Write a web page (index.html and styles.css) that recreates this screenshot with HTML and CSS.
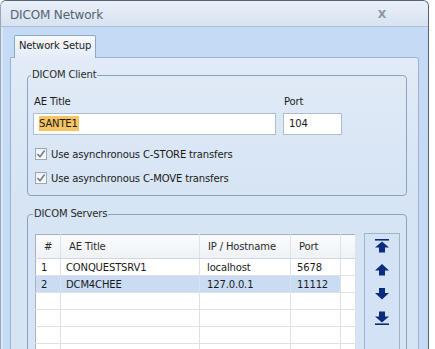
FILE: index.html
```html
<!DOCTYPE html>
<html>
<head>
<meta charset="utf-8">
<link rel="stylesheet" href="styles.css">
</head>
<body>
<div class="window">
  <div class="titlebar">
    <span class="title">DICOM Network</span>
    <span class="close">X</span>
  </div>
  <div class="frame">
    <div class="tabs"><div class="tab">Network Setup</div></div>
    <div class="panel">
      <fieldset class="group client">
        <legend>DICOM Client</legend>
        <div class="fields">
          <div class="field ae">
            <div class="label">AE Title</div>
            <div class="input"><span class="sel">SANTE1</span></div>
          </div>
          <div class="field port">
            <div class="label">Port</div>
            <div class="input">104</div>
          </div>
        </div>
        <div class="check first">
          <span class="box"><svg viewBox="0 0 10 10" width="10" height="10"><path d="M1.5 5 L4 7.8 L8.6 1.6" fill="none" stroke="#6f7e92" stroke-width="1.6"/></svg></span>
          <span>Use asynchronous C-STORE transfers</span>
        </div>
        <div class="check">
          <span class="box"><svg viewBox="0 0 10 10" width="10" height="10"><path d="M1.5 5 L4 7.8 L8.6 1.6" fill="none" stroke="#6f7e92" stroke-width="1.6"/></svg></span>
          <span>Use asynchronous C-MOVE transfers</span>
        </div>
      </fieldset>
      <fieldset class="group servers">
        <legend>DICOM Servers</legend>
        <div class="servers-body">
          <table class="grid">
            <colgroup>
              <col class="c-num"><col class="c-ae"><col class="c-ip"><col class="c-port"><col class="c-fill">
            </colgroup>
            <thead>
              <tr><th class="num">#</th><th>AE Title</th><th>IP / Hostname</th><th>Port</th><th></th></tr>
            </thead>
            <tbody>
              <tr><td>1</td><td>CONQUESTSRV1</td><td>localhost</td><td>5678</td><td class="fill"></td></tr>
              <tr class="selected"><td>2</td><td>DCM4CHEE</td><td>127.0.0.1</td><td>11112</td><td class="fill"></td></tr>
              <tr><td></td><td></td><td></td><td></td><td class="fill"></td></tr>
              <tr><td></td><td></td><td></td><td></td><td class="fill"></td></tr>
              <tr><td></td><td></td><td></td><td></td><td class="fill"></td></tr>
              <tr><td></td><td></td><td></td><td></td><td class="fill"></td></tr>
            </tbody>
          </table>
          <div class="movebar">
            <svg class="mv" viewBox="0 0 16 14" width="16" height="14"><rect x="1" y="0" width="14" height="1.6" fill="#0d2b7e"/><path d="M8 2.5 L15 8.5 L11 8.5 L11 13.5 L5 13.5 L5 8.5 L1 8.5 Z" fill="#0d2b7e"/></svg>
            <svg class="mv" viewBox="0 0 16 14" width="16" height="14"><path d="M8 1 L15 7.5 L11 7.5 L11 12.5 L5 12.5 L5 7.5 L1 7.5 Z" fill="#0d2b7e"/></svg>
            <svg class="mv" viewBox="0 0 16 14" width="16" height="14"><path d="M5 1 L11 1 L11 6 L15 6 L8 12.5 L1 6 L5 6 Z" fill="#0d2b7e"/></svg>
            <svg class="mv" viewBox="0 0 16 14" width="16" height="14"><path d="M5 0.5 L11 0.5 L11 5.5 L15 5.5 L8 11.5 L1 5.5 L5 5.5 Z" fill="#0d2b7e"/><rect x="1" y="12.4" width="14" height="1.6" fill="#0d2b7e"/></svg>
          </div>
        </div>
      </fieldset>
    </div>
  </div>
</div>
</body>
</html>
```

FILE: styles.css
```css
* { box-sizing: border-box; }
html, body {
  margin: 0;
  padding: 0;
  background: #ffffff;
  height: 349px;
  overflow: hidden;
}
body {
  font-family: "DejaVu Sans", "Liberation Sans", sans-serif;
  font-size: 10px;
  letter-spacing: -0.15px;
  color: #1a1a1a;
}
.window {
  width: 429px;
  height: 360px;
  border-top: 1px solid #55636f;
  border-left: 1px solid #9aa7b5;
  border-right: 1px solid #55636f;
  border-radius: 6px 6px 0 0;
  background: #c5dbf5;
  overflow: hidden;
}
.titlebar {
  height: 26px;
  display: flex;
  align-items: center;
  justify-content: space-between;
  padding: 2px 42px 0 9px;
  background: linear-gradient(#e9eff8, #d8e3f1);
  border-bottom: 1px solid #aebfd4;
}
.title {
  font-size: 12px;
  color: #556372;
}
.close {
  font-size: 11px;
  font-weight: bold;
  color: #8a96a4;
}
.frame {
  border-left: 2px solid #dde8f5;
  padding: 8px 9px 0 7px;
}
.tabs {
  display: flex;
  padding-left: 4px;
}
.tab {
  position: relative;
  z-index: 1;
  width: 82px;
  height: 23px;
  margin-bottom: -1px;
  padding: 4px 0 0 4px;
  border: 1px solid #8fa6c4;
  border-bottom: none;
  border-radius: 2px 2px 0 0;
  background: linear-gradient(#f7f9fd, #e4ecf7);
  color: #222;
}
.panel {
  height: 300px;
  border: 1px solid #9cb2cf;
  border-radius: 0 3px 0 0;
  background: linear-gradient(#e2ebf7, #d6e4f4 140px);
  padding: 10px 11px 0 16px;
}
.group {
  margin: 0;
  border: 1px solid #8aa3c3;
  border-radius: 4px;
  min-width: 0;
}
.group legend {
  padding: 0 1px;
  margin-left: -2px;
  line-height: 14px;
  color: #2a2a2a;
}
.client {
  padding: 13px 6px 11px 5px;
}
.fields {
  display: flex;
  gap: 7px;
}
.field .label {
  height: 14px;
  line-height: 14px;
  margin-bottom: 4px;
  padding-left: 1px;
}
.ae { width: 243px; }
.port { width: 59px; }
.input {
  height: 22px;
  border: 1px solid #aebdd0;
  background: #ffffff;
  line-height: 20px;
  padding-left: 5px;
}
.sel {
  background: #f5c463;
  padding: 2px 1px 2px 0;
}
.check {
  display: flex;
  align-items: center;
  height: 12px;
  margin-top: 12px;
  padding-left: 2px;
  gap: 4px;
}
.check.first { margin-top: 13px; }
.box {
  width: 12px;
  height: 12px;
  border: 1px solid #98a6b8;
  background: linear-gradient(#eef2f7, #ffffff);
  display: flex;
  align-items: center;
  justify-content: center;
}
.box svg { display: block; }
.servers {
  margin-top: 11px;
  padding: 13px 6px 0 7px;
  height: 160px;
}
.servers-body {
  display: flex;
  align-items: flex-start;
  gap: 8px;
}
.grid {
  width: 320px;
  border-collapse: collapse;
  table-layout: fixed;
  border: 1px solid #a7b3c2;
  background: #ffffff;
}
.c-num { width: 25px; }
.c-ae { width: 139px; }
.c-ip { width: 91px; }
.c-port { width: 50px; }
.c-fill { width: 15px; }
.grid th {
  height: 24px;
  font-weight: normal;
  text-align: left;
  padding: 0 0 0 8px;
  background: linear-gradient(#fbfcfd, #eef1f5);
  border-bottom: 1px solid #cfd6df;
  border-right: 1px solid #dfe3e8;
  color: #2a2a2a;
  white-space: nowrap;
}
.grid th.num { text-align: center; padding: 0; }
.grid td {
  height: 17px;
  padding: 0 0 0 5px;
  border-right: 1px solid #dde2e8;
  border-bottom: 1px solid #dde2e8;
  white-space: nowrap;
  overflow: hidden;
}
.grid td:nth-child(2) { padding-left: 5px; }
.grid td:nth-child(3) { padding-left: 7px; }
.grid td:nth-child(4) { padding-left: 6px; }
.grid tr.selected td { background: #c9dcf3; }
.grid tr.selected td.fill { background: #ffffff; }
.movebar {
  width: 36px;
  height: 130px;
  margin-top: -1px;
  border: 1px solid #a2b3c9;
  background: #d3e2f4;
  display: flex;
  flex-direction: column;
  align-items: center;
  padding-top: 5px;
  gap: 10px;
}
.mv { display: block; }
```
